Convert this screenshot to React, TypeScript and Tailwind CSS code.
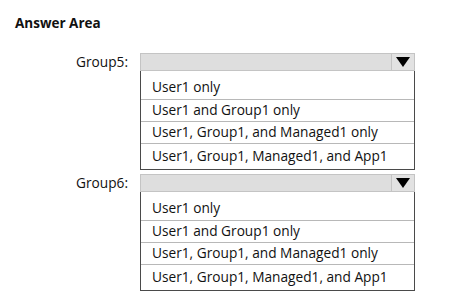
const options = [
  "User1 only",
  "User1 and Group1 only",
  "User1, Group1, and Managed1 only",
  "User1, Group1, Managed1, and App1",
]

function Dropdown({ label }: { label: string }) {
  return (
    <div className="flex">
      <div className="w-[125px] h-[18px] pr-[12px] flex items-center justify-end text-[13.7px] text-[#111]">
        {label}
      </div>
      <div className="w-[275px]">
        {/* select bar */}
        <div className="h-[18px] flex bg-[#dedede] border border-[#c4c4c4]">
          <div className="flex-1" />
          <div className="w-[23px] border-l border-[#c4c4c4] bg-[#e2e2e2] flex items-center justify-center">
            <svg width="14" height="10" viewBox="0 0 14 10">
              <path d="M0 0 H14 L7 10 Z" fill="#000" />
            </svg>
          </div>
        </div>
        {/* options list */}
        <div className="border border-[#4a4a4a] border-t-0 bg-white">
          {options.map((opt, i) => (
            <div
              key={opt}
              className={
                i === 0
                  ? "h-[29px] flex items-end pb-[2px] pl-[11px] border-b border-[#b8b8b8]"
                  : i === options.length - 1
                  ? "h-[25px] flex items-center pl-[11px]"
                  : "h-[22px] flex items-center pl-[11px] border-b border-[#b8b8b8]"
              }
            >
              {opt}
            </div>
          ))}
        </div>
      </div>
    </div>
  )
}

export default function App() {
  return (
    <div
      className="w-[453px] h-[294px] bg-white text-[13.7px] text-[#111]"
      style={{ fontFamily: '"Open Sans", "Noto Sans", sans-serif' }}
    >
      <div className="pl-[15px] pt-[13px] text-[13.5px] font-bold text-[#111]">Answer Area</div>
      <div className="pl-[15px] mt-[20px] flex flex-col gap-[4px]">
        <Dropdown label="Group5:" />
        <Dropdown label="Group6:" />
      </div>
    </div>
  )
}
